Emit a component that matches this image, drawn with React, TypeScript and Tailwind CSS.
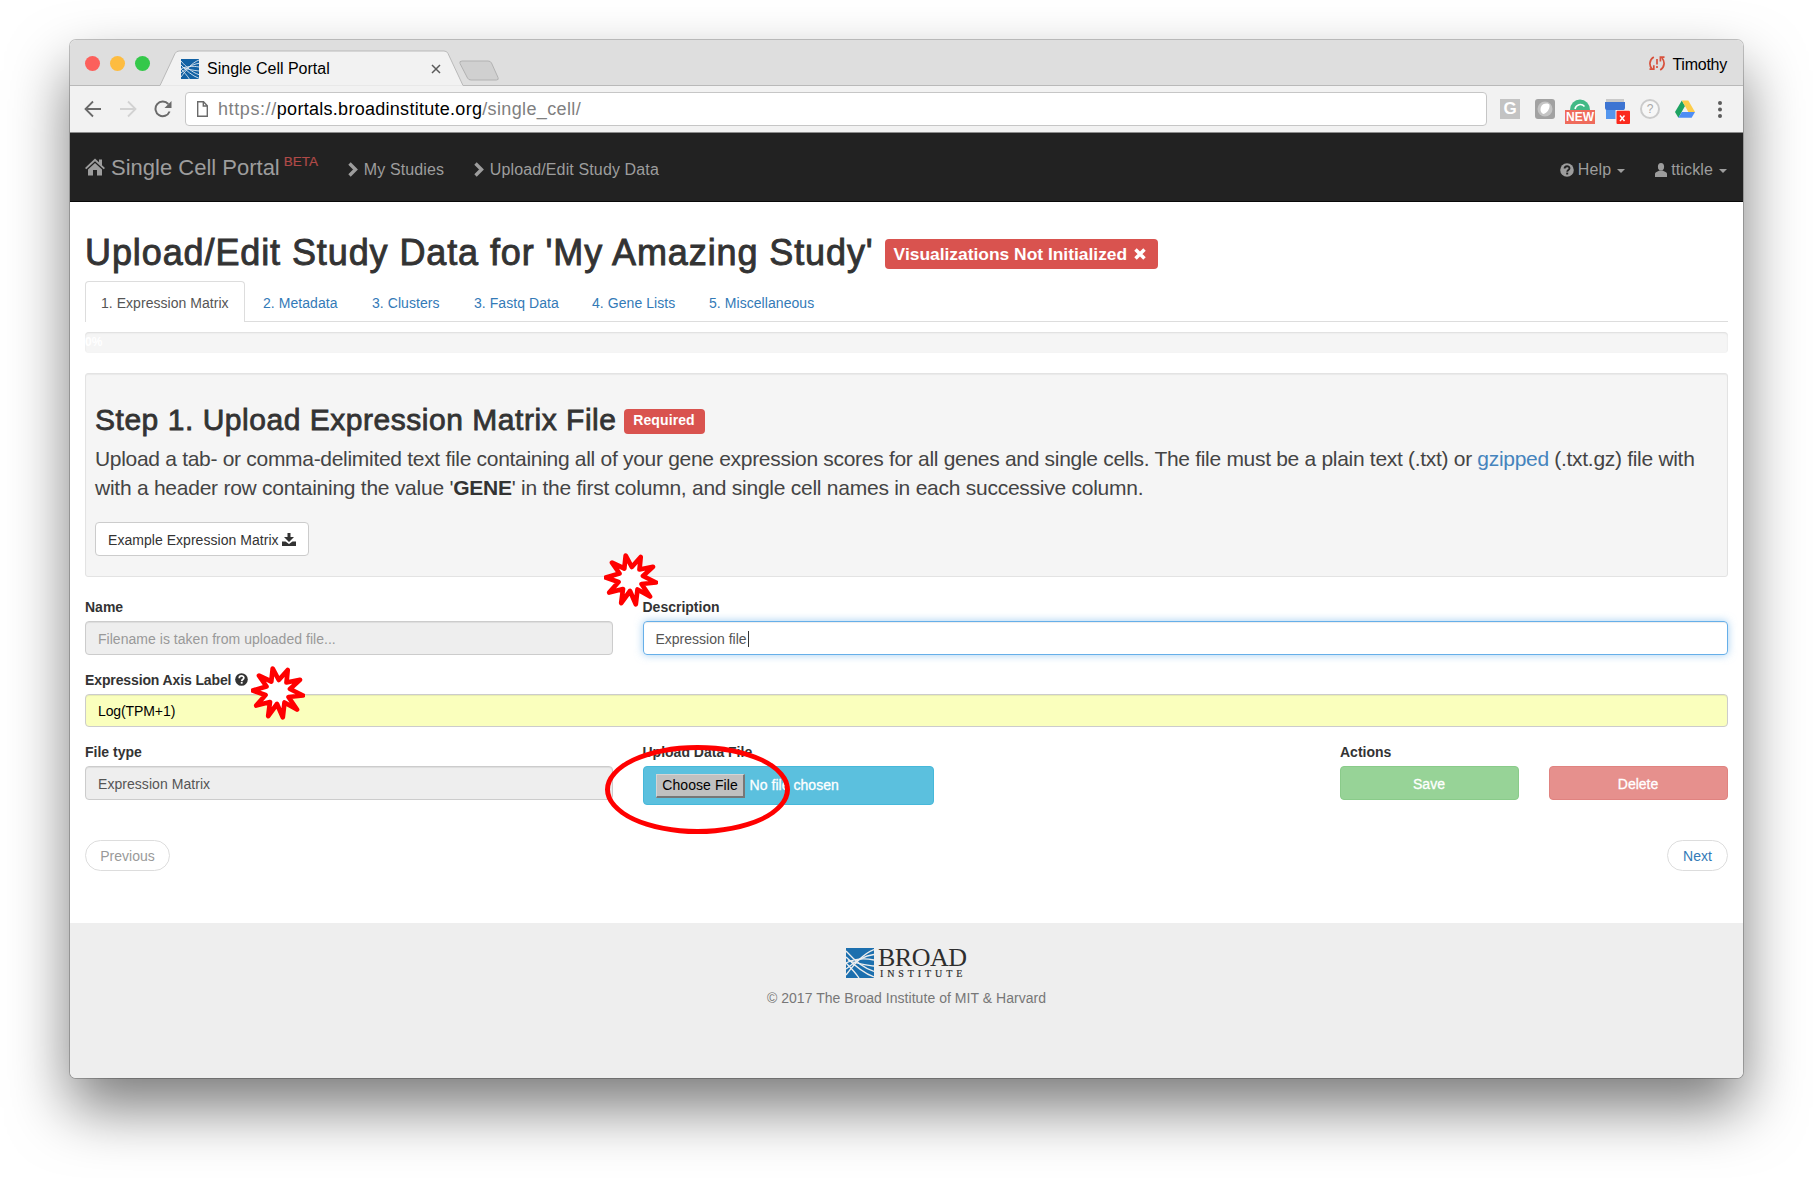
import React from "react";

const tabs = [
  { label: "2. Metadata", w: "w-[109px]" },
  { label: "3. Clusters", w: "w-[102px]" },
  { label: "3. Fastq Data", w: "w-[118px]" },
  { label: "4. Gene Lists", w: "w-[117px]" },
  { label: "5. Miscellaneous", w: "w-[140px]" },
];

function BroadMark({ className, color, line }: { className: string; color: string; line: string }) {
  return (
    <svg className={className} viewBox="0 0 28 30" preserveAspectRatio="none">
      <rect width="28" height="30" fill={color} />
      <g fill="none" stroke={line} strokeWidth="1.3">
        <path d="M0 3C8 12 17 20 28 23.500" />
        <path d="M0 9C8 17 17 25 28 29" />
        <path d="M2 12C10 16 20 17 28 18" />
        <path d="M0 15C5 20 9 24 13 30" />
        <path d="M0 27C7 18 16 6 28 1.500" />
        <path d="M0 21C8 14 17 8 28 6.500" />
        <path d="M0 15C8 11 18 10 28 12" />
      </g>
    </svg>
  );
}

function QuestionCircle({ className, hole }: { className: string; hole: string }) {
  return (
    <svg className={className} viewBox="0 0 14 14">
      <circle cx="7" cy="7" r="6.800" fill="currentColor" />
      <path d="M4.600 5.600C4.600 2.400 9.500 2.500 9.500 5.200C9.500 7 7.300 6.900 7.200 8.700" fill="none" stroke={hole} strokeWidth="1.900" />
      <rect x="6.200" y="9.600" width="2" height="1.900" fill={hole} />
    </svg>
  );
}

function Chevron() {
  return (
    <svg className="mt-[2px] h-[15px] w-[10px]" viewBox="0 0 10 15">
      <path d="M1.500 1.500L7.500 7.500L1.500 13.500" fill="none" stroke="currentColor" strokeWidth="3.400" />
    </svg>
  );
}

function Caret() {
  return <span className="mt-[1px] h-0 w-0 border-x-4 border-t-4 border-x-transparent border-t-current" />;
}

function Burst({ className }: { className: string }) {
  return (
    <svg className={className} viewBox="0 0 54 54">
      <path
        d="M21.700 2.500L27.800 14L36.700 4L35.500 16.500L49 13.800L39 23L52 29.500L37.500 31L46 43.500L33.500 36.500L31.800 51.300L26 38L17.200 50L19 36L5.200 39.600L14.500 29L1.800 24.500L15.500 20.500L8 9.700L20.300 15.500Z"
        fill="#fff"
        stroke="#f00"
        strokeWidth="4.700"
        strokeLinejoin="round"
      />
    </svg>
  );
}

function TitleBar() {
  return (
    <div className="relative h-[46px] shrink-0 bg-[#dedede]">
      <svg className="absolute left-0 top-0 h-[46px] w-full" viewBox="0 0 1673 46" preserveAspectRatio="none">
        <path d="M0 45.500H90L105 13.500Q106.500 11 109 11H374Q377 11 378 13.500L393 45.500H1673" fill="#f2f2f2" stroke="#b9b9b9" />
        <path d="M392 21H418Q420.500 21 421.500 23L428 37.500Q429 40 426.500 40H401Q398.500 40 397.500 38L390 23.500Q389 21 392 21Z" fill="#d0d0d0" stroke="#b2b2b2" />
      </svg>
      <div className="relative flex h-full items-start">
        <div className="ml-[15px] mt-[16px] flex gap-[10px]">
          <span className="h-[15px] w-[15px] rounded-full bg-[#fc605c]" />
          <span className="h-[15px] w-[15px] rounded-full bg-[#fdbc40]" />
          <span className="h-[15px] w-[15px] rounded-full bg-[#34c84a]" />
        </div>
        <BroadMark className="ml-[31px] mt-[19px] h-[20px] w-[18px]" color="#1161a4" line="#e8eef4" />
        <span className="ml-[8px] mt-[17px] w-[224px] text-[16px] leading-[24px] text-black">Single Cell Portal</span>
        <svg className="mt-[24px] h-[10px] w-[10px]" viewBox="0 0 10 10">
          <path d="M1 1L9 9M9 1L1 9" stroke="#5a5a5a" strokeWidth="1.500" />
        </svg>
        <div className="ml-auto mr-[16px] mt-[14px] flex">
          <svg className="mr-[7px] mt-[2px] h-[15px] w-[16px]" viewBox="0 0 16 15" fill="none" stroke="#d8513c" strokeWidth="1.700">
            <path d="M4.800 1C0 4 0 9.500 3 13M0.500 13.200H4.800V9.200" />
            <path d="M11.200 14C16 11 16 5.500 13 2M15.500 1.200H11.400V5.400" />
            <path d="M8 3V8.500M8 10V12" />
          </svg>
          <span className="text-[16px] leading-[22px] tracking-[-0.250px] text-black">Timothy</span>
        </div>
      </div>
    </div>
  );
}

function Toolbar() {
  return (
    <div className="flex h-[47px] shrink-0 items-center border-b border-[#8c8c8c] bg-[#f2f2f2]">
      <svg className="ml-[14px] h-[18px] w-[18px]" viewBox="0 0 18 18" fill="none" stroke="#6a6a6a" strokeWidth="1.800">
        <path d="M17 9H2M9 1.500L1.500 9L9 16.500" />
      </svg>
      <svg className="ml-[17px] h-[18px] w-[18px]" viewBox="0 0 18 18" fill="none" stroke="#d2d2d2" strokeWidth="1.800">
        <path d="M1 9H16M9 1.500L16.500 9L9 16.500" />
      </svg>
      <svg className="ml-[17px] h-[18px] w-[18px]" viewBox="0 0 18 18" fill="none" stroke="#6a6a6a" strokeWidth="2">
        <path d="M15.600 11.500A7.300 7.300 0 1 1 14.300 4" />
        <path d="M17.500 1V8H10.500Z" fill="#6a6a6a" stroke="none" />
      </svg>
      <div className="ml-[13px] flex h-[34px] w-[1302px] items-center rounded-[4px] border border-[#c6c6c6] bg-white pl-[11px]">
        <svg className="h-[16px] w-[11px]" viewBox="0 0 11 16" fill="none" stroke="#6a6a6a" strokeWidth="1.400">
          <path d="M0.700 0.700H6.500L10.300 4.700V15.300H0.700ZM6.300 0.700V5H10.300" />
        </svg>
        <span className="ml-[10px] text-[18px] leading-[24px] tracking-[0.370px] text-[#808080]">
          <span className="tracking-[0.600px]">https://</span>
          <span className="tracking-[0.280px] text-black">portals.broadinstitute.org</span>/single_cell/
        </span>
      </div>
      <div className="ml-[13px] flex h-[20px] items-start gap-[15px]">
        <div className="flex h-[20px] w-[20px] items-center justify-center bg-[#c3c3c3] text-[17px] font-bold leading-[20px] text-white">G</div>
        <div className="flex h-[20px] w-[20px] items-center justify-center rounded-[3px] bg-[#a2a2a2]">
          <svg className="h-[16px] w-[16px]" viewBox="0 0 16 16">
            <circle cx="8" cy="8" r="7.500" fill="#c4c4c4" />
            <path d="M4 6C5 2 12 1.500 12.500 4C13 8 10 12 6.500 13C3.500 11.500 3 9 4 6Z" fill="#fff" />
          </svg>
        </div>
        <div className="-mx-[5px] flex w-[30px] flex-col items-center">
          <svg className="h-[11px] w-[20px]" viewBox="0 0 20 11">
            <path d="M0 11A10 10.500 0 0 1 20 11Z" fill="#41b986" />
            <path d="M5 10A5.500 5.500 0 0 1 14.500 7.500" fill="none" stroke="#fff" strokeWidth="1.500" />
          </svg>
          <span className="h-[14px] w-[30px] bg-[#ef6b5c] text-center text-[12px] font-bold leading-[15px] text-white">NEW</span>
        </div>
        <svg className="-mr-[5px] h-[26px] w-[25px]" viewBox="0 0 25 26">
          <path d="M1 0H19V4H1Z" fill="#c9c9c9" />
          <path d="M1 8H19V20H1Z" fill="#5496ee" />
          <path d="M0 3H20V9Q20 11 18 11H2Q0 11 0 9Z" fill="#3d74d2" />
          <rect x="10.500" y="11" width="14.500" height="15" fill="#f2f2f2" />
          <rect x="11.500" y="11.700" width="13.500" height="13.300" rx="1" fill="#fb2a1d" />
          <path d="M15 16.500L19.500 22M19.500 16.500L15 22" stroke="#fff" strokeWidth="1.500" />
        </svg>
        <div className="flex h-[20px] w-[20px] items-center justify-center rounded-full border-[2.500px] border-[#cbcbcb] bg-[#f7f7f7] text-[12px] leading-none text-[#a9a9a9]">?</div>
        <svg className="mt-[1px] h-[18px] w-[20px]" viewBox="0 0 20 18">
          <path d="M6.800 0.500L0 12L3.400 17.800L10 6Z" fill="#1da362" />
          <path d="M6.800 0.500H13.300L20 12H13.400Z" fill="#fdcd4a" />
          <path d="M6.800 12H20L16.600 17.800H3.400Z" fill="#4e8df5" />
        </svg>
        <svg className="ml-[8px] mt-[2px] h-[18px] w-[4px]" viewBox="0 0 4 18" fill="#5c5c5c">
          <circle cx="2" cy="2" r="2" />
          <circle cx="2" cy="8.500" r="2" />
          <circle cx="2" cy="15" r="2" />
        </svg>
      </div>
    </div>
  );
}

function NavBar() {
  return (
    <div className="flex h-[69px] shrink-0 items-start border-b border-[#080808] bg-[#222] text-[16px] leading-[20px] tracking-[0.130px] text-[#9d9d9d]">
      <svg className="ml-[15px] mt-[25px] h-[18px] w-[20px]" viewBox="0 0 20 18" fill="currentColor">
        <path d="M10 0.500L14 4.300V1.500H17V7.200L20 10L18.700 11.300L10 3.200L1.300 11.300L0 10Z" />
        <path d="M10 5L17 11.500V17.500H12V12H8V17.500H3V11.500Z" />
      </svg>
      <span className="ml-[6px] mt-[22px] text-[22px] leading-[26px] tracking-normal">Single Cell Portal</span>
      <span className="ml-[4px] mt-[19px] w-[64px] text-[13.500px] leading-[20px] tracking-normal text-[#b04a48] [-webkit-text-stroke:0.200px_#b04a48]">BETA</span>
      <div className="mt-[27px] flex w-[126px] gap-[6px]">
        <Chevron />
        <span>My Studies</span>
      </div>
      <div className="mt-[27px] flex gap-[6px]">
        <Chevron />
        <span>Upload/Edit Study Data</span>
      </div>
      <div className="ml-auto mr-[16px] mt-[27px] flex items-center">
        <QuestionCircle className="mr-[4px] h-[14px] w-[14px]" hole="#222" />
        <span>Help</span>
        <span className="ml-[6px] mr-[1px] flex">
          <Caret />
        </span>
        <svg className="ml-[29px] mr-[4px] h-[14px] w-[12px]" viewBox="0 0 12 14" fill="currentColor">
          <ellipse cx="6" cy="3.800" rx="3.100" ry="3.800" />
          <path d="M4.400 7.500H7.600L11 9.200Q12 9.700 12 11V14H0V11Q0 9.700 1 9.200Z" />
        </svg>
        <span>ttickle</span>
        <span className="ml-[6px] flex">
          <Caret />
        </span>
      </div>
    </div>
  );
}

function Label({ children }: { children: React.ReactNode }) {
  return <div className="flex h-[25px] items-start pt-[1px] font-bold">{children}</div>;
}

const field = "flex items-center rounded-[4px] border border-[#ccc] px-[12px] pt-[1px] shadow-[inset_0_1px_1px_rgba(0,0,0,0.075)]";

export default function App() {
  return (
    <div className="relative h-[1178px] w-[1813px] overflow-hidden bg-white pl-[70px] pt-[40px] font-['Liberation_Sans',Arial,sans-serif] text-[14px] leading-[20px] text-[#333]">
      <div className="flex h-[1038px] w-[1673px] flex-col overflow-hidden rounded-[6px] bg-white shadow-[0_0_0_1px_rgba(0,0,0,0.22),0_30px_60px_rgba(0,0,0,0.52)]">
        <TitleBar />
        <Toolbar />
        <NavBar />

        <div className="flex h-[721px] shrink-0 flex-col px-[15px]">
          <div className="mt-[31px] flex h-[48px] items-start">
            <h1 className="whitespace-nowrap text-[36px] leading-[40px] tracking-[0.900px] [-webkit-text-stroke:0.900px_#333]">
              Upload/Edit Study Data for 'My Amazing Study'
            </h1>
            <span className="ml-[11px] mt-[6px] flex h-[30px] w-[273px] items-center rounded-[4px] bg-[#d9534f] pl-[9px] text-[17.400px] font-bold text-white">
              Visualizations Not Initialized
              <svg className="ml-[7px] h-[12px] w-[12px]" viewBox="0 0 12 12">
                <path d="M1.500 1.500L10.500 10.500M10.500 1.500L1.500 10.500" stroke="#fff" strokeWidth="3.500" />
              </svg>
            </span>
          </div>

          <div className="flex h-[41px] shrink-0 border-b border-[#ddd] text-[#337ab7]">
            <div className="-mb-px flex w-[160px] items-center rounded-t-[4px] border border-b-0 border-[#ddd] bg-white pl-[15px] pt-[1px] tracking-[0.040px] text-[#555]">
              1. Expression Matrix
            </div>
            {tabs.map((t) => (
              <div key={t.label} className={"flex items-center pl-[18px] pt-[3px] tracking-[0.060px] " + t.w}>
                {t.label}
              </div>
            ))}
          </div>

          <div className="mt-[10px] h-[21px] shrink-0 overflow-hidden rounded-[4px] bg-[#f5f5f5] text-[12px] font-bold leading-[21px] text-white shadow-[inset_0_1px_2px_rgba(0,0,0,0.1)]">
            0%
          </div>

          <div className="mt-[20px] flex h-[204px] shrink-0 flex-col items-start rounded-[3px] border border-[#e3e3e3] bg-[#f5f5f5] px-[9px] shadow-[inset_0_1px_1px_rgba(0,0,0,0.05)]">
            <div className="mt-[29px] flex h-[41px] items-start">
              <h2 className="whitespace-nowrap text-[30px] leading-[34px] tracking-[0.530px] [-webkit-text-stroke:0.800px_#333]">
                Step 1. Upload Expression Matrix File
              </h2>
              <span className="ml-[7px] mt-[6px] flex h-[25px] w-[81px] items-center justify-center rounded-[4px] bg-[#d9534f] pb-[3px] text-[14px] font-bold tracking-[0.100px] text-white">
                Required
              </span>
            </div>
            <p className="whitespace-nowrap text-[21px] leading-[29px] tracking-[-0.252px] text-[#444]">
              <span className="tracking-[-0.300px]">
                Upload a tab- or comma-delimited text file containing all of your gene expression scores for all genes and single cells. The file must be a
                plain text (.txt) or <span className="text-[#4584bd]">gzipped</span> (.txt.gz) file with
              </span>
              <br />
              with a header row containing the value '<b className="text-[#333]">GENE</b>' in the first column, and single cell names in each successive column.
            </p>
            <div className="mt-[20px] flex h-[34px] w-[214px] items-center rounded-[4px] border border-[#ccc] bg-white pl-[12px] pt-[1px] tracking-[0.040px]">
              Example Expression Matrix
              <svg className="ml-[3px] h-[13px] w-[14px]" viewBox="0 0 14 13" fill="currentColor">
                <path d="M5.500 0H8.500V4H12L7 9L2 4H5.500Z" />
                <path d="M0 8.500H3.500L7 11L10.500 8.500H14V13H0Z" />
              </svg>
            </div>
          </div>

          <div className="mt-[19px] grid grid-cols-[527.500px_1fr] gap-x-[30px]">
            <div>
              <Label>Name</Label>
              <div className={field + " h-[34px] bg-[#eee] tracking-[0.030px] text-[#999]"}>Filename is taken from uploaded file...</div>
            </div>
            <div>
              <Label>Description</Label>
              <div className="flex h-[34px] items-center rounded-[4px] border border-[#66afe9] px-[12px] pt-[1px] text-[#555] shadow-[inset_0_1px_1px_rgba(0,0,0,0.075),0_0_8px_rgba(102,175,233,0.6)]">
                Expression file
                <span className="ml-[1px] h-[16px] w-px bg-[#333]" />
              </div>
            </div>
          </div>

          <div className="mt-[14px]">
            <Label>
              <span className="tracking-[-0.120px]">Expression Axis Label</span>
              <QuestionCircle className="ml-[4px] mt-[3px] h-[13px] w-[13px]" hole="#fff" />
            </Label>
            <div className={field + " h-[33px] bg-[#faffbd] tracking-[-0.100px] text-black"}>Log(TPM+1)</div>
          </div>

          <div className="mt-[14px] flex">
            <div className="w-[527.500px]">
              <Label>File type</Label>
              <div className={field + " h-[34px] bg-[#eee] tracking-[0.050px] text-[#555]"}>Expression Matrix</div>
            </div>
            <div className="ml-[30px] w-[291px]">
              <Label>Upload Data File</Label>
              <div className="flex h-[39px] items-center rounded-[4px] border border-[#46b8da] bg-[#5bc0de] pl-[12px] text-white">
                <span className="flex h-[24px] w-[89px] items-center justify-center border-b-2 border-r-2 border-b-[#777] border-r-[#777] border-l border-t border-l-[#d4d4d4] border-t-[#d4d4d4] bg-[#c0c0c0] pl-[1px] text-[14px] tracking-[0.080px] text-black">
                  Choose File
                </span>
                <span className="mb-[1px] ml-[5px] tracking-[0.050px] [-webkit-text-stroke:0.300px_#fff]">No file chosen</span>
              </div>
            </div>
            <div className="ml-auto w-[388px]">
              <Label>Actions</Label>
              <div className="flex justify-between text-white [-webkit-text-stroke:0.300px_#fff]">
                <div className="flex h-[34px] w-[179px] items-center justify-center rounded-[4px] border border-[#8acb8a] bg-[#97d397] pr-[1px] pt-[1px]">Save</div>
                <div className="flex h-[34px] w-[179px] items-center justify-center rounded-[4px] border border-[#e08380] bg-[#e6908d] pr-[1px] pt-[1px]">Delete</div>
              </div>
            </div>
          </div>

          <div className="mt-[35px] flex justify-between">
            <div className="flex h-[31px] w-[85px] items-center justify-center rounded-full border border-[#ddd] pt-[1px] text-[#999]">Previous</div>
            <div className="flex h-[31px] w-[61px] items-center justify-center rounded-full border border-[#ddd] pt-[1px] text-[#337ab7]">Next</div>
          </div>
        </div>

        <div className="flex flex-1 flex-col items-center bg-[#eee]">
          <div className="mt-[25px] flex h-[30px] items-start">
            <BroadMark className="h-[30px] w-[28px]" color="#1c6fae" line="#eee" />
            <div className="ml-[4px] flex w-[89px] flex-col font-['Liberation_Serif',serif] text-[#2e2e2e]">
              <span className="text-[26px] leading-[20px] tracking-[-0.500px]">BROAD</span>
              <span className="pl-[2px] pt-[1px] text-[10px] leading-[10px] tracking-[3.900px] [-webkit-text-stroke:0.200px_#2e2e2e]">INSTITUTE</span>
            </div>
          </div>
          <span className="mt-[10px] tracking-[0.040px] text-[#777]">© 2017 The Broad Institute of MIT &amp; Harvard</span>
        </div>
      </div>

      <Burst className="absolute left-[604px] top-[553px] h-[54px] w-[54px]" />
      <Burst className="absolute left-[251px] top-[666px] h-[54px] w-[54px]" />
      <div className="absolute left-[605px] top-[744.500px] h-[89px] w-[184.500px] rounded-[50%] border-[5px] border-[#f00]" />
    </div>
  );
}
